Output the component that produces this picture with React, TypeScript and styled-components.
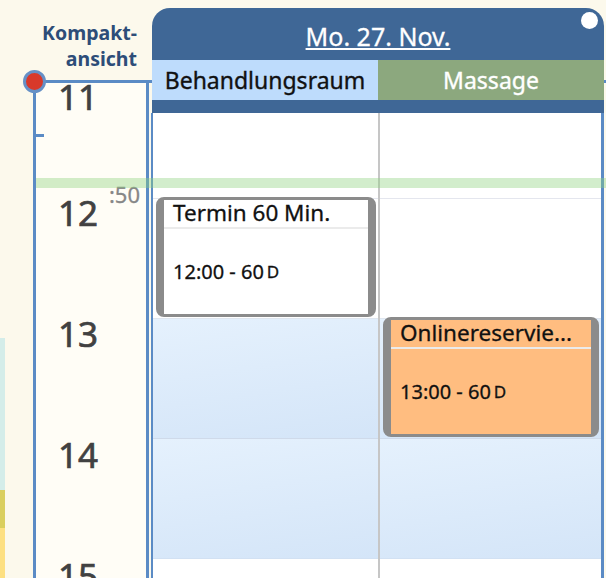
import React from "react";
import styled, { createGlobalStyle } from "styled-components";

const FRAME_BLUE = "#5b8bc5";

const GlobalStyle = createGlobalStyle`
  html, body { margin: 0; padding: 0; }
  body {
    background: #fcf9ec;
    font-family: "Noto Sans", "Open Sans", sans-serif;
  }
  *, *::before, *::after { box-sizing: border-box; }
`;

const Page = styled.div`
  width: 606px;
  height: 578px;
  overflow: hidden;
  display: flex;
  align-items: flex-start;
  background: #fcf9ec;
`;

const SideStrip = styled.div`
  flex: none;
  width: 5px;
  padding-top: 338px;
  display: flex;
  flex-direction: column;
`;

const StripSegment = styled.div<{ $color: string; $h: number }>`
  height: ${(p) => p.$h}px;
  background: ${(p) => p.$color};
`;

const Frame = styled.div`
  position: relative;
  flex: none;
  width: 573px;
  margin: 8px 0 0 28px;
  display: flex;
  gap: 2px;

  &::before {
    content: "";
    position: absolute;
    left: 0;
    right: 0;
    top: 72px;
    height: 3px;
    background: ${FRAME_BLUE};
    z-index: 0;
  }
`;

const TimeColumn = styled.div`
  position: relative;
  z-index: 1;
  flex: none;
  width: 116px;
  display: flex;
  flex-direction: column;
`;

const ViewLabel = styled.div`
  height: 72px;
  padding: 12px 12px 0 0;
  text-align: right;
  font-weight: 700;
  font-size: 19.5px;
  line-height: 26px;
  color: #2d4d78;
`;

const TimeBox = styled.div`
  position: relative;
  height: 520px;
  border: 3px solid ${FRAME_BLUE};
  border-bottom: none;
  background: #fffdf6;
`;

const RedDot = styled.span`
  position: absolute;
  left: -13px;
  top: -13px;
  width: 23px;
  height: 23px;
  border-radius: 50%;
  background: #d8392b;
  border: 3px solid #6690c6;
  z-index: 2;
`;

const Tick = styled.span`
  position: absolute;
  left: 0;
  top: 51px;
  width: 8px;
  height: 3px;
  background: ${FRAME_BLUE};
`;

const HourRow = styled.div<{ $first?: boolean }>`
  height: ${(p) => (p.$first ? 115 : 120)}px;
  padding-left: 22px;
`;

const HourLabel = styled.div<{ $first?: boolean }>`
  margin-top: ${(p) => (p.$first ? -4 : 1)}px;
  font-size: 35px;
  line-height: 1;
  font-weight: 400;
  color: #414141;
  -webkit-text-stroke: 0.7px #414141;
`;

const NowLabel = styled.span`
  position: absolute;
  right: 6px;
  top: 100px;
  font-size: 22px;
  line-height: 1;
  color: #878787;
  -webkit-text-stroke: 0.3px #878787;
`;

const NowLine = styled.div`
  position: absolute;
  left: 3px;
  right: -2px;
  top: 170px;
  height: 10px;
  background: rgba(143, 210, 127, 0.4);
  z-index: 5;
  pointer-events: none;
`;

const DayPanel = styled.div`
  position: relative;
  z-index: 2;
  flex: none;
  width: 453px;
  display: flex;
  flex-direction: column;
`;

const DayHeader = styled.div`
  position: relative;
  margin-left: 1px;
  background: #3f6796;
  border-radius: 18px 18px 0 0;
  padding-bottom: 13px;
`;

const DayTitle = styled.div`
  height: 52px;
  padding-top: 5px;
  line-height: 47px;
  text-align: center;
  font-size: 25px;
  color: #ffffff;
  -webkit-text-stroke: 0.3px #ffffff;
`;

const TitleLink = styled.span`
  text-decoration: underline;
  text-decoration-thickness: 2px;
  text-underline-offset: 2px;
`;

const StatusDot = styled.span`
  position: absolute;
  top: 4px;
  right: 6px;
  width: 17px;
  height: 17px;
  border-radius: 50%;
  background: #ffffff;
`;

const SubHeaders = styled.div`
  display: grid;
  grid-template-columns: 1fr 1fr;
  height: 40px;
`;

const SubHead = styled.div<{ $bg: string; $color: string }>`
  background: ${(p) => p.$bg};
  color: ${(p) => p.$color};
  -webkit-text-stroke: 0.35px ${(p) => p.$color};
  text-align: center;
  font-size: 23px;
  line-height: 40px;
  white-space: nowrap;
  overflow: hidden;
`;

const DayBody = styled.div`
  display: grid;
  grid-template-columns: 227px 1fr;
  background: #ffffff;
  border-left: 2px solid ${FRAME_BLUE};
  border-right: 3px solid ${FRAME_BLUE};
`;

const ResourceColumn = styled.div<{ $divider?: boolean }>`
  position: relative;
  display: flex;
  flex-direction: column;
  border-right: ${(p) => (p.$divider ? "2px solid #c6c6c6" : "none")};
`;

const Cell = styled.div<{ $h: number; $line: string; $shaded: boolean }>`
  height: ${(p) => p.$h}px;
  border-top: 1px solid ${(p) => p.$line};
  background: ${(p) =>
    p.$shaded ? "linear-gradient(172deg, #e5f1fd 0%, #d4e5f8 100%)" : "#ffffff"};
`;

const Event = styled.div<{ $top: number; $height: number; $bg: string }>`
  position: absolute;
  left: 3px;
  right: 2px;
  top: ${(p) => p.$top}px;
  height: ${(p) => p.$height}px;
  display: flex;
  flex-direction: column;
  background: ${(p) => p.$bg};
  border-style: solid;
  border-color: #8b8b8b;
  border-width: 3px 8px 3px 8px;
  border-radius: 8px;
  color: #111111;
  -webkit-text-stroke: 0.3px #111111;
`;

const EventTitle = styled.div`
  padding: 0 6px 0 9px;
  margin-top: -1px;
  font-size: 22.5px;
  line-height: 28px;
  white-space: nowrap;
  border-bottom: 2px solid #ebebeb;
`;

const EventBody = styled.div`
  flex: 1;
  display: flex;
  align-items: center;
  padding-left: 9px;
  font-size: 20px;
  white-space: nowrap;
`;

const Unit = styled.span`
  margin-left: 3px;
  font-size: 17px;
`;

const HOUR_PX = 120;
const NOON_OFFSET = 85; // px from top of body to 12:00

const resources = [
  { name: "Behandlungsraum", bg: "#bedcfc", color: "#111111" },
  { name: "Massage", bg: "#8ca87e", color: "#ffffff" },
];

type Ev = { title: string; start: string; duration: number; bg: string };

const events: Ev[][] = [
  [{ title: "Termin 60 Min.", start: "12:00", duration: 60, bg: "#ffffff" }],
  [{ title: "Onlinereservie...", start: "13:00", duration: 60, bg: "#ffbd80" }],
];

const cells = [
  { h: 85, line: "transparent", shaded: false },
  { h: 120, line: "#e4e6ee", shaded: false },
  { h: 120, line: "#dfe6ef", shaded: true },
  { h: 120, line: "#cfdaea", shaded: true },
  { h: 120, line: "#d2e1f3", shaded: false },
];

const hours = [11, 12, 13, 14, 15];

function eventTop(start: string) {
  const [h, m] = start.split(":").map(Number);
  return NOON_OFFSET + (h - 12) * HOUR_PX + m * (HOUR_PX / 60) - 1;
}

export default function App() {
  return (
    <>
      <GlobalStyle />
      <Page>
        <SideStrip>
          <StripSegment $color="#d4ede9" $h={152} />
          <StripSegment $color="#dacf5f" $h={38} />
          <StripSegment $color="#fde082" $h={60} />
        </SideStrip>
        <Frame>
          <TimeColumn>
            <ViewLabel>
              Kompakt-
              <br />
              ansicht
            </ViewLabel>
            <TimeBox>
              <RedDot />
              <Tick />
              {hours.map((h, i) => (
                <HourRow key={h} $first={i === 0}>
                  <HourLabel $first={i === 0}>{h}</HourLabel>
                </HourRow>
              ))}
              <NowLabel>:50</NowLabel>
            </TimeBox>
          </TimeColumn>
          <DayPanel>
            <DayHeader>
              <DayTitle>
                <TitleLink>Mo. 27. Nov.</TitleLink>
              </DayTitle>
              <StatusDot />
              <SubHeaders>
                {resources.map((r) => (
                  <SubHead key={r.name} $bg={r.bg} $color={r.color}>
                    {r.name}
                  </SubHead>
                ))}
              </SubHeaders>
            </DayHeader>
            <DayBody>
              {resources.map((r, ci) => (
                <ResourceColumn key={r.name} $divider={ci === 0}>
                  {cells.map((c, i) => (
                    <Cell key={i} $h={c.h} $line={c.line} $shaded={c.shaded} />
                  ))}
                  {events[ci].map((ev) => (
                    <Event
                      key={ev.title}
                      $top={eventTop(ev.start)}
                      $height={ev.duration * (HOUR_PX / 60)}
                      $bg={ev.bg}
                    >
                      <EventTitle>{ev.title}</EventTitle>
                      <EventBody>
                        {ev.start} - {ev.duration}
                        <Unit>D</Unit>
                      </EventBody>
                    </Event>
                  ))}
                </ResourceColumn>
              ))}
            </DayBody>
          </DayPanel>
          <NowLine />
        </Frame>
      </Page>
    </>
  );
}
